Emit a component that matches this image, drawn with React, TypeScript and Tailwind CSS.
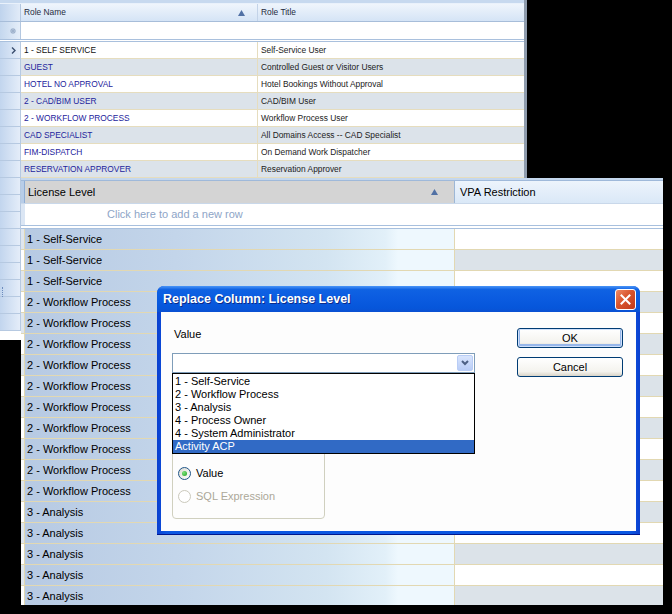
const roleRows = [
  ["1 - SELF SERVICE", "Self-Service User"],
  ["GUEST", "Controlled Guest or Visitor Users"],
  ["HOTEL NO APPROVAL", "Hotel Bookings Without Approval"],
  ["2 - CAD/BIM USER", "CAD/BIM User"],
  ["2 - WORKFLOW PROCESS", "Workflow Process User"],
  ["CAD SPECIALIST", "All Domains Access -- CAD Specialist"],
  ["FIM-DISPATCH", "On Demand Work Dispatcher"],
  ["RESERVATION APPROVER", "Reservation Approver"],
  ["", ""],
  ["", ""],
  ["", ""],
  ["", ""],
  ["", ""],
  ["", ""],
  ["", ""],
  ["", ""],
  ["", ""],
];

const licenseRows = [
  "1 - Self-Service",
  "1 - Self-Service",
  "1 - Self-Service",
  "2 - Workflow Process",
  "2 - Workflow Process",
  "2 - Workflow Process",
  "2 - Workflow Process",
  "2 - Workflow Process",
  "2 - Workflow Process",
  "2 - Workflow Process",
  "2 - Workflow Process",
  "2 - Workflow Process",
  "2 - Workflow Process",
  "3 - Analysis",
  "3 - Analysis",
  "3 - Analysis",
  "3 - Analysis",
  "3 - Analysis",
];

const options = [
  "1 - Self-Service",
  "2 - Workflow Process",
  "3 - Analysis",
  "4 - Process Owner",
  "4 - System Administrator",
  "Activity ACP",
];

const SortUp = () => (
  <svg width="7" height="6" viewBox="0 0 7 6">
    <polygon points="3.5,0 7,6 0,6" fill="#5171a5" />
  </svg>
);

const RoleGrid = () => {
  return (
    <div className="absolute left-0 top-0 w-[527px] h-[340px] bg-white overflow-hidden border-r-[3px] border-[#8e9bac] flex flex-col text-[8.4px]">
      <div className="h-[4px] shrink-0 bg-[#c7d9ef] border-b border-[#e9f1fb]" />
      <div className="flex h-[18px] shrink-0 border-b border-[#a7bdd9] bg-[linear-gradient(#eff5fc,#d5e4f6)] text-[#1f2b3d]">
        <div className="w-[21px] shrink-0 border-r border-[#b3c7e0] bg-[linear-gradient(to_right,#bfd3ed,#e1ebf8)]" />
        <div className="w-[237px] shrink-0 flex items-center justify-between pl-[3px] pr-[12px] border-r border-[#c3d3e8]">
          <span>Role Name</span>
          <SortUp />
        </div>
        <div className="flex-1 flex items-center pl-[3px]">Role Title</div>
      </div>
      <div className="flex h-[17px] shrink-0">
        <div className="w-[21px] shrink-0 flex items-center justify-center pl-[6px] border-r border-[#b3c7e0] bg-[linear-gradient(to_right,#c4d7ee,#e5eef9)]">
          <svg width="6" height="6" viewBox="0 0 6 6" stroke="#9fb2cc" strokeWidth="1.2">
            <line x1="3" y1="0" x2="3" y2="6" />
            <line x1="0" y1="3" x2="6" y2="3" />
            <line x1="1" y1="1" x2="5" y2="5" />
            <line x1="5" y1="1" x2="1" y2="5" />
          </svg>
        </div>
        <div className="flex-1" />
      </div>
      <div className="h-[3px] shrink-0 border-y border-[#a9c0dd] bg-white" />
      {roleRows.map(([name, title], i) => (
        <div
          key={i}
          className={`flex h-[17px] shrink-0 ${i % 2 === 1 ? "bg-[#dce3ea]" : "bg-white"}`}
        >
          <div className="w-[21px] shrink-0 flex items-center justify-center pl-[6px] border-r border-b border-[#b6c9e1] bg-[linear-gradient(to_right,#c2d5ee,#e4edf9)]">
            {i === 0 && (
              <svg width="5" height="7" viewBox="0 0 5 7">
                <polyline points="1,0.5 4,3.5 1,6.5" fill="none" stroke="#3b4e6e" strokeWidth="1.4" />
              </svg>
            )}
          </div>
          <div
            className={`w-[237px] shrink-0 flex items-center pl-[3px] border-r border-b border-[#e6ddbe] ${i === 0 ? "text-[#111]" : "text-[#23239c]"}`}
          >
            {name}
          </div>
          <div className="flex-1 flex items-center pl-[3px] border-b border-[#e6ddbe] text-[#222]">
            {title}
          </div>
        </div>
      ))}
      <div className="absolute left-[2px] top-[287px] h-[10px] border-l border-dotted border-[#6d8cbd]" />
    </div>
  );
};

const LicenseGrid = () => {
  return (
    <div className="absolute left-[21px] top-[178px] w-[642px] h-[427px] bg-white overflow-hidden flex flex-col text-[11px] text-black">
      <div className="h-[3px] shrink-0 bg-[#c4d7ee] border-b border-[#9fb9da]" />
      <div className="flex h-[23px] shrink-0 border-b border-[#c9d8ea]">
        <div className="w-[4px] shrink-0 bg-[#b8cde8] border-r border-[#8faed6]" />
        <div className="w-[429px] shrink-0 flex items-center justify-between pl-[3px] pr-[16px] bg-[#d4d4d4]">
          <span>License Level</span>
          <SortUp />
        </div>
        <div className="flex-1 flex items-center pl-[5px] border-l border-[#9db7d6] bg-[linear-gradient(#edf4fc,#dae8f7)]">
          VPA Restriction
        </div>
      </div>
      <div className="flex h-[21px] shrink-0 items-center">
        <div className="w-[4px] self-stretch shrink-0 bg-[#dbe6f4]" />
        <span className="pl-[82px] text-[#8ea5c7]">Click here to add a new row</span>
      </div>
      <div className="h-[4px] shrink-0 border-y border-[#a8c0de] bg-white" />
      {licenseRows.map((level, i) => (
        <div key={i} className="flex h-[21px] shrink-0">
          <div
            className={`w-[4px] shrink-0 border-r border-b border-[#e2d8b2] ${i % 2 === 1 ? "bg-white" : "bg-[#dfe6ee]"}`}
          />
          <div className="w-[429px] shrink-0 flex items-center pl-[2px] border-b border-[#e2d8b2] bg-[linear-gradient(to_right,#b7cae3,#c3d5ea_35%,#d3e4f1_70%,#e2f0f9_84%,#eef8fe_87%,#eef8fe)]">
            {level}
          </div>
          <div
            className={`flex-1 border-l border-b border-[#e2d8b2] ${i % 2 === 1 ? "bg-[#dce3e9]" : "bg-white"}`}
          />
        </div>
      ))}
    </div>
  );
};

const Radio = ({ checked, disabled }: { checked?: boolean; disabled?: boolean }) => (
  <div
    className={`w-[13px] h-[13px] rounded-full border flex items-center justify-center ${
      disabled
        ? "border-[#cbc9bc] bg-white"
        : "border-[#1f5588] bg-[linear-gradient(135deg,#dcdbd3,#ffffff)]"
    }`}
  >
    {checked && (
      <div className="w-[5px] h-[5px] rounded-full bg-[radial-gradient(circle_at_35%_35%,#7be27b,#21a121)]" />
    )}
  </div>
);

const ReplaceDialog = () => {
  return (
    <div className="absolute left-[157px] top-[286px] w-[483px] h-[249px] rounded-t-[7px] bg-[linear-gradient(to_right,#0a3fcf,#0b57e2_2%,#0b57e2_98%,#0a3fcf)] border-b border-[#00178e] flex flex-col overflow-hidden">
      <div className="h-[26px] shrink-0 flex items-center justify-between pl-[6px] pr-[4px] bg-[linear-gradient(to_bottom,#4a95f7_0%,#0f62e3_14%,#0a5be0_50%,#0656da_85%,#0a50d2_100%)]">
        <span className="text-white font-bold text-[12.5px] [text-shadow:1px_1px_0_#0a2a8a]">
          Replace Column: License Level
        </span>
        <div className="w-[21px] h-[21px] rounded-[3px] border border-white bg-[linear-gradient(135deg,#ee8a66,#d9542c_45%,#c0391a)] flex items-center justify-center">
          <svg width="11" height="11" viewBox="0 0 11 11" stroke="white" strokeWidth="2" strokeLinecap="square">
            <line x1="1.5" y1="1.5" x2="9.5" y2="9.5" />
            <line x1="9.5" y1="1.5" x2="1.5" y2="9.5" />
          </svg>
        </div>
      </div>
      <div className="flex-1 mx-[4px] mb-[3px] bg-[#fdfdfd] flex text-[11px] text-black">
        <div className="ml-[11px] w-[303px] flex flex-col pt-[15px]">
          <div className="h-[14px] pl-[2px] leading-[14px]">Value</div>
          <div className="relative mt-[12px] h-[20px] border border-[#7f9db9] bg-white flex items-center justify-end pr-[1px]">
            <div className="w-[16px] h-[16px] rounded-[2px] border border-[#b9cdf6] bg-[linear-gradient(#d9e5fd,#b9cdf7)] flex items-center justify-center">
              <svg width="8" height="6" viewBox="0 0 8 6">
                <polyline points="1,1 4,4 7,1" fill="none" stroke="#4d6185" strokeWidth="2" />
              </svg>
            </div>
            <div className="absolute left-[-1px] right-[-1px] top-[19px] h-[81px] z-10 border border-black bg-white pt-[1px]">
              {options.map((o) => (
                <div
                  key={o}
                  className={`h-[13px] leading-[13px] pl-[2px] ${o === "Activity ACP" ? "bg-[#316ac5] text-white" : ""}`}
                >
                  {o}
                </div>
              ))}
            </div>
          </div>
          <div className="mt-[10px] w-[153px] h-[136px] rounded-[4px] border border-[#d0d0bf] flex flex-col gap-[9px] pt-[82px] pl-[5px]">
            <div className="flex items-center gap-[5px] h-[14px]">
              <Radio checked />
              <span>Value</span>
            </div>
            <div className="flex items-center gap-[5px] h-[14px] text-[#aca899]">
              <Radio disabled />
              <span>SQL Expression</span>
            </div>
          </div>
        </div>
        <div className="ml-[42px] w-[106px] flex flex-col gap-[9px] pt-[16px]">
          <div className="h-[20px] rounded-[3px] border border-[#003c74] bg-[linear-gradient(#ffffff,#f4f3ee_75%,#d9d4c8)] shadow-[inset_0_0_0_1px_#cfe0fa,inset_0_-1px_0_2px_#97b7ea] flex items-center justify-center">
            OK
          </div>
          <div className="h-[20px] rounded-[3px] border border-[#003c74] bg-[linear-gradient(#ffffff,#f4f3ee_75%,#d9d4c8)] flex items-center justify-center">
            Cancel
          </div>
        </div>
      </div>
    </div>
  );
};

export default function App() {
  return (
    <div className="relative w-[672px] h-[614px] bg-black overflow-hidden font-['Liberation_Sans',Arial,sans-serif]">
      <RoleGrid />
      <LicenseGrid />
      <ReplaceDialog />
    </div>
  );
}
